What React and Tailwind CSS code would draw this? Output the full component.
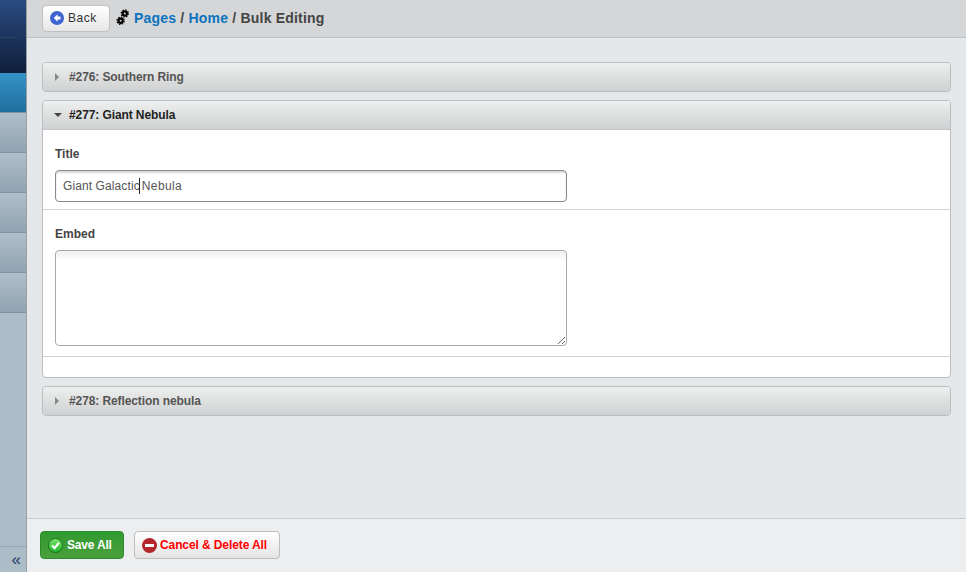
function Gear({ cx, cy }) {
  return (
    <g>
      <circle cx={cx} cy={cy} r="3.6" fill="none" stroke="#000" strokeWidth="1.3" strokeDasharray="1.4 1.43" />
      <circle cx={cx} cy={cy} r="3.2" fill="#000" />
      <circle cx={cx} cy={cy} r="1" fill="#d5d6d8" />
    </g>
  );
}

function SideItem({ className }) {
  return <div className={`shrink-0 border-b border-[#7f939f] ${className}`} />;
}

function PanelHeader({ title, open }) {
  return (
    <div className={`flex h-[28px] items-center bg-gradient-to-b from-[#eef0ef] to-[#cfd1d2] pl-[12px] text-[12px] font-bold tracking-[-0.1px] ${open ? 'text-[#222]' : 'text-[#555]'}`}>
      {open ? (
        <span className="mr-[7px] ml-[-1px] h-0 w-0 border-x-[4px] border-t-[4px] border-x-transparent border-t-[#444]" />
      ) : (
        <span className="mr-[10px] h-0 w-0 border-y-[4px] border-l-[4px] border-y-transparent border-l-[#888]" />
      )}
      {title}
    </div>
  );
}

function ClosedPanel({ title }) {
  return (
    <div className="overflow-hidden rounded-[4px] border border-[#bbbdc0]">
      <PanelHeader title={title} />
    </div>
  );
}

export default function App() {
  return (
    <div className="flex h-[572px] w-[966px] overflow-hidden bg-[#e5e8eb] font-['Liberation_Sans',Arial,sans-serif]">
      {/* Sidebar */}
      <div className="flex w-[27px] shrink-0 flex-col border-r border-[#9b9fa2] bg-[#adbdc8]">
        <div className="h-[73px] shrink-0 bg-gradient-to-b from-[#2a4b82] to-[#111f3c] pt-[37px]">
          <div className="h-px w-[18px] bg-[#1c4a62]" />
        </div>
        <SideItem className="h-[40px] border-0 bg-gradient-to-b from-[#3592c6] to-[#1f6f9e]" />
        <SideItem className="h-[40px] bg-gradient-to-b from-[#b0bfca] to-[#8fa3b0]" />
        <SideItem className="h-[40px] bg-gradient-to-b from-[#b0bfca] to-[#8fa3b0]" />
        <SideItem className="h-[40px] bg-gradient-to-b from-[#b0bfca] to-[#8fa3b0]" />
        <SideItem className="h-[40px] bg-gradient-to-b from-[#b0bfca] to-[#8fa3b0]" />
        <SideItem className="h-[40px] bg-gradient-to-b from-[#b0bfca] to-[#8fa3b0]" />
        <div className="flex-1 border-b border-[#98a8b3]" />
        <div className="flex h-[25px] items-center justify-end pr-[5px] text-[17px] leading-none text-[#223a66]">
          «
        </div>
      </div>

      <div className="flex min-w-0 flex-1 flex-col">
        {/* Top bar */}
        <div className="flex h-[38px] shrink-0 items-center border-b border-[#bfc1c3] bg-[#d5d6d8] pb-[1px] pl-[15px]">
          <button className="flex h-[27px] w-[68px] items-center rounded-[4px] border border-[#c0c0c0] bg-gradient-to-b from-white to-[#e6e6e6] pl-[7px] text-[12px] tracking-[0.5px] text-[#333]">
            <svg width="14" height="14" viewBox="0 0 14 14" className="mr-[4px]">
              <circle cx="7" cy="7" r="7" fill="#3f63cf" />
              <path d="M7.5 3.2 3.8 7l3.7 3.8V8.6h3V5.4h-3z" fill="#fff" />
            </svg>
            Back
          </button>
          <svg width="14" height="18" viewBox="0 0 14 18" className="mr-[4px] ml-[6px]">
            <Gear cx={8.8} cy={4.5} />
            <Gear cx={4.6} cy={11.8} />
          </svg>
          <div className="text-[14px] font-bold tracking-[0.2px] text-[#444]">
            <span className="text-[#0b72bd]">Pages</span> / <span className="text-[#0b72bd]">Home</span> / Bulk Editing
          </div>
        </div>

        {/* Panels */}
        <div className="flex flex-1 flex-col gap-[8px] px-[15px] pt-[24px]">
          <ClosedPanel title="#276: Southern Ring" />

          <div className="overflow-hidden rounded-[4px] border border-[#bbbdc0] bg-white">
            <div className="border-b border-[#c4c6c8]">
              <PanelHeader title="#277: Giant Nebula" open />
            </div>
            <div className="h-[80px] border-b border-[#d0d2d4] px-[12px] pt-[16px]">
              <div className="text-[12px] leading-[16px] font-bold text-[#444]">Title</div>
              <div className="mt-[8px] flex h-[32px] w-[512px] items-center rounded-[4px] border border-[#8a8a8a] pl-[7px] text-[12px] text-[#555] shadow-[inset_0_2px_2px_rgba(0,0,0,0.15)]">
                <span className="tracking-[0.1px]">Giant Galactic</span>
                <span className="mx-[-1px] inline-block h-[16px] w-[1px] bg-[#222]" />
                <span className="ml-[3px] tracking-[0.4px]">Nebula</span>
              </div>
            </div>
            <div className="h-[147px] border-b border-[#d0d2d4] px-[12px] pt-[16px]">
              <div className="text-[12px] leading-[16px] font-bold text-[#444]">Embed</div>
              <textarea
                readOnly
                className="mt-[8px] block h-[96px] w-[512px] rounded-[4px] border border-[#a8a8a8] bg-gradient-to-b from-[#efefef] to-white to-[10px] outline-none"
              />
            </div>
            <div className="h-[20px]" />
          </div>

          <ClosedPanel title="#278: Reflection nebula" />
        </div>

        {/* Footer */}
        <div className="flex h-[54px] shrink-0 items-start gap-[10px] border-t border-[#c8cacc] bg-[#eceef0] pt-[12px] pl-[13px]">
          <button className="flex h-[28px] w-[84px] items-center rounded-[4px] border border-[#2e8a2e] bg-gradient-to-b from-[#2f9a30] to-[#4a9f3b] pl-[7px] text-[12px] font-bold tracking-[-0.2px] text-white">
            <svg width="15" height="15" viewBox="0 0 15 15" className="mr-[4px]">
              <defs>
                <linearGradient id="okFill" x1="0" y1="0" x2="0" y2="1">
                  <stop offset="0" stopColor="#7be36b" />
                  <stop offset="1" stopColor="#1fb52d" />
                </linearGradient>
              </defs>
              <circle cx="7.5" cy="7.5" r="7" fill="url(#okFill)" stroke="#1a6f1a" strokeWidth="1" />
              <path d="M4 7.5 6.6 10.2 11 4.8" fill="none" stroke="#fff" strokeWidth="2.2" />
            </svg>
            Save All
          </button>
          <button className="flex h-[28px] w-[146px] items-center rounded-[4px] border border-[#bdbdbd] bg-gradient-to-b from-white to-[#e4e4e4] pl-[7px] text-[12px] font-bold tracking-[-0.1px] text-[#ff0000]">
            <svg width="15" height="15" viewBox="0 0 15 15" className="mr-[3px]">
              <circle cx="7.5" cy="7.5" r="7.5" fill="#b3262b" />
              <rect x="3" y="6" width="9" height="3" fill="#fff" />
            </svg>
            Cancel &amp; Delete All
          </button>
        </div>
      </div>
    </div>
  );
}
